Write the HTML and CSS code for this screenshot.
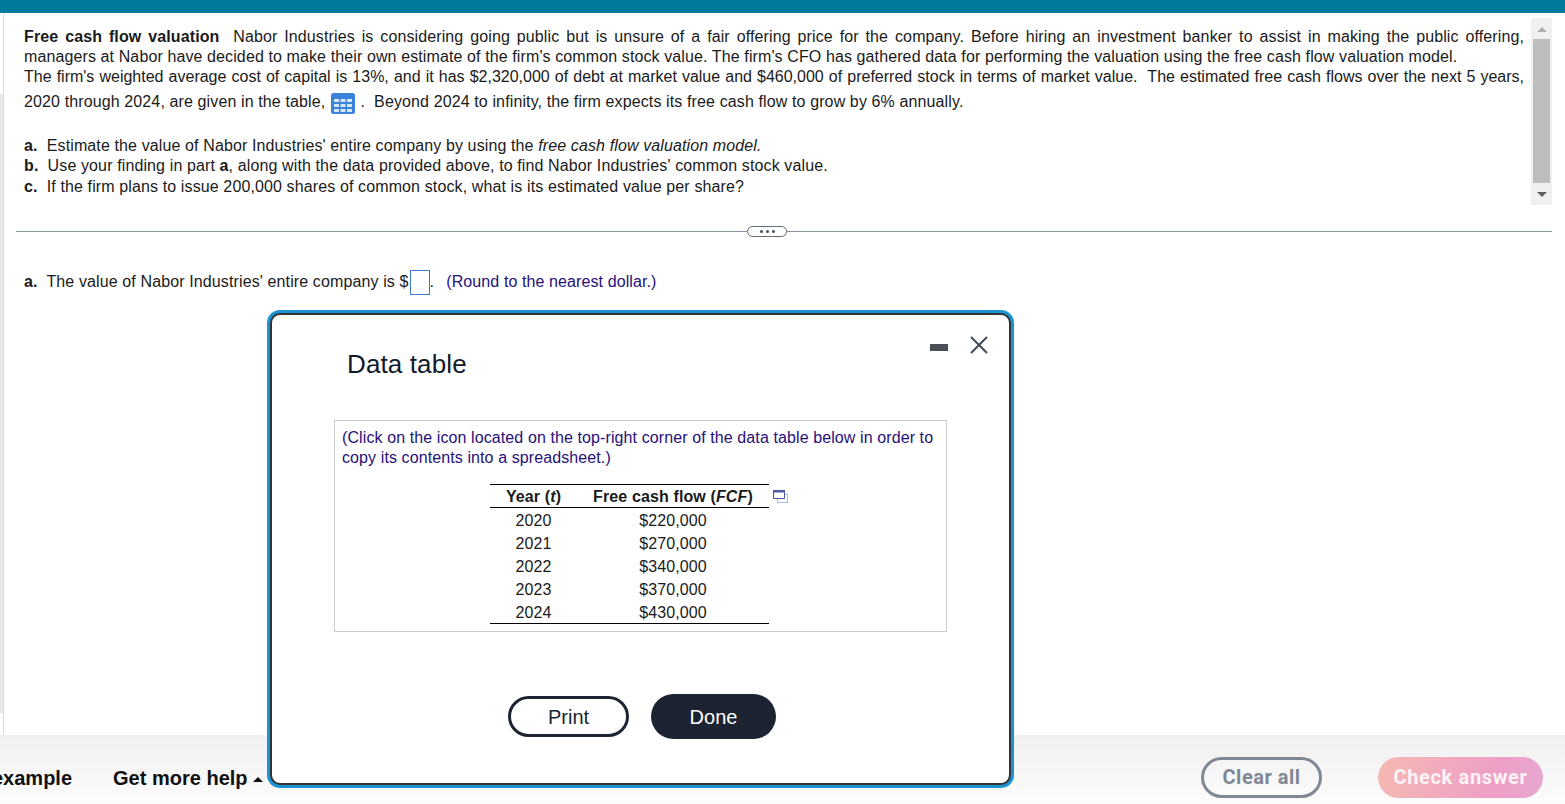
FILE: index.html
```html
<!DOCTYPE html>
<html lang="en">
<head>
    <meta charset="UTF-8">
    <title>Free cash flow valuation</title>
    <link rel="stylesheet" href="styles.css">
</head>
<body>
    <div class="topbar"></div>
    <div class="edge"></div>
    <div class="main">
        <div class="question-area">
            <div class="question">
                <p class="intro"><span class="first-line"><b>Free cash flow valuation</b>&nbsp;&nbsp;Nabor Industries is considering going public but is unsure of a fair offering price for the company. Before hiring an investment banker to assist in making the public offering,</span> managers at Nabor have decided to make their own estimate of the firm's common stock value. The firm's CFO has gathered data for performing the valuation using the free cash flow valuation model.</p>
                <p class="given">The firm's weighted average cost of capital is 13%, and it has $2,320,000 of debt at market value and $460,000 of preferred stock in terms of market value.&nbsp; The estimated free cash flows over the next 5 years, <span class="last-line">2020 through 2024, are given in the table,
                    <svg class="table-icon" width="24" height="21" viewBox="0 0 24 21">
                        <rect width="24" height="21" rx="2.500" fill="#3b83d8"/>
                        <g fill="#d6e6fa">
                            <rect x="3" y="6" width="5" height="3"/><rect x="9.500" y="6" width="5" height="3"/><rect x="16" y="6" width="5" height="3"/>
                            <rect x="3" y="11" width="5" height="3"/><rect x="9.500" y="11" width="5" height="3"/><rect x="16" y="11" width="5" height="3"/>
                            <rect x="3" y="16" width="5" height="3"/><rect x="9.500" y="16" width="5" height="3"/><rect x="16" y="16" width="5" height="3"/>
                        </g>
                    </svg>&nbsp;.&nbsp;&nbsp;Beyond 2024 to infinity, the firm expects its free cash flow to grow by 6% annually.</span></p>
                <ul class="parts">
                    <li><b>a.</b>&nbsp; Estimate the value of Nabor Industries' entire company by using the <i>free cash flow valuation model.</i></li>
                    <li><b>b.</b>&nbsp; Use your finding in part <b>a</b>, along with the data provided above, to find Nabor Industries' common stock value.</li>
                    <li><b>c.</b>&nbsp; If the firm plans to issue 200,000 shares of common stock, what is its estimated value per share?</li>
                </ul>
            </div>
            <div class="scrollbar">
                <span class="arrow-up"></span>
                <span class="thumb"></span>
                <span class="arrow-down"></span>
            </div>
        </div>
        <div class="divider"><span class="more"><i></i><i></i><i></i></span></div>
        <p class="answer"><b>a.</b>&nbsp; The value of Nabor Industries' entire company is $<span class="answer-box"></span>.&nbsp; <span class="note round">(Round to the nearest dollar.)</span></p>
    </div>
    <div class="footer">
        <span class="link example">example</span>
        <span class="link help">Get more help <span class="caret"></span></span>
        <span class="spacer"></span>
        <button class="clear">Clear all</button>
        <button class="check">Check answer</button>
    </div>

    <div class="modal">
        <div class="modal-head">
            <h1>Data table</h1>
            <div class="modal-tools">
                <span class="minimize"></span>
                <svg width="18" height="18" viewBox="0 0 18 18"><path d="M1 1l16 16M17 1L1 17" stroke="#3f4a57" stroke-width="2" fill="none"/></svg>
            </div>
        </div>
        <div class="data-box">
            <p class="note">(Click on the icon located on the top-right corner of the data table below in order to copy its contents into a spreadsheet.)</p>
            <div class="table-wrap">
                <table>
                    <thead>
                        <tr><th class="col-year">Year (<i>t</i>)</th><th>Free cash flow (<i>FCF</i>)</th></tr>
                    </thead>
                    <tbody>
                        <tr><td>2020</td><td>$220,000</td></tr>
                        <tr><td>2021</td><td>$270,000</td></tr>
                        <tr><td>2022</td><td>$340,000</td></tr>
                        <tr><td>2023</td><td>$370,000</td></tr>
                        <tr><td>2024</td><td>$430,000</td></tr>
                    </tbody>
                </table>
                <svg class="copy-icon" width="15" height="13" viewBox="0 0 15 13">
                    <rect x="4.500" y="4.500" width="10" height="8" fill="#fff" stroke="#b4b9dc"/>
                    <rect x="0.500" y="1" width="11" height="7.500" fill="#fff" stroke="#4d5aa8"/>
                    <rect x="0" y="0" width="12" height="2.500" fill="#4d5aa8"/>
                </svg>
            </div>
        </div>
        <div class="modal-buttons">
            <button class="print">Print</button>
            <button class="done">Done</button>
        </div>
    </div>
</body>
</html>
```

FILE: styles.css
```css
* {
    box-sizing: border-box;
}

html, body {
    height: 100%;
}

body {
    margin: 0;
    font-family: "Liberation Sans", Arial, sans-serif;
    font-size: 16px;
    line-height: 20px;
    letter-spacing: 0.12px;
    color: #1a1a1a;
    background-color: #fff;
    display: flex;
    flex-direction: column;
    overflow: hidden;
    position: relative;
}

p {
    margin: 0;
}

.topbar {
    height: 13px;
    background-color: #00799e;
}

.edge {
    position: absolute;
    left: 0;
    top: 94px;
    width: 3px;
    height: 619px;
    background-color: #e8e8e8;
}

.main {
    height: 722px;
    margin-left: 3px;
    padding-top: 5px;
    border-left: 1px solid #ddd;
}

.question-area {
    display: flex;
    height: 187px;
    padding-left: 20px;
}

.question {
    width: 1500px;
    padding-top: 9px;
}

.intro {
    letter-spacing: 0.11px;
}

.first-line {
    display: block;
    text-align: justify;
    text-align-last: justify;
}

.given {
    letter-spacing: 0;
    text-align: justify;
}

.last-line {
    letter-spacing: 0.12px;
}

.table-icon {
    vertical-align: -7px;
    margin: 6px 1px 0 1px;
}

.parts {
    list-style: none;
    margin: 22px 0 0;
    padding: 0;
}

.parts li:last-child {
    margin-top: 1px;
}

.scrollbar {
    width: 21px;
    height: 187px;
    margin-left: 7px;
    background-color: #f0f0f0;
    display: flex;
    flex-direction: column;
    align-items: center;
}

.thumb {
    width: 17px;
    height: 144px;
    background-color: #bdbdbd;
}

.arrow-up, .arrow-down {
    width: 0;
    height: 0;
    border-left: 5px solid transparent;
    border-right: 5px solid transparent;
}

.arrow-up {
    margin: 9px 0 7px;
    border-bottom: 5px solid #b0b0b0;
}

.arrow-down {
    margin-top: 9px;
    border-top: 5px solid #606060;
}

.divider {
    margin: 26px 13px 0 12px;
    height: 1px;
    background-color: #8b93a3;
    display: flex;
    align-items: center;
}

.more {
    width: 40px;
    height: 11px;
    margin-left: 731px;
    background-color: #fff;
    border: 1px solid #5f6b7a;
    border-radius: 6px;
    display: flex;
    justify-content: center;
    align-items: center;
    gap: 3px;
}

.more i {
    width: 3px;
    height: 3px;
    border-radius: 50%;
    background-color: #444f5c;
}

.answer {
    margin: 38px 0 0 20px;
}

.answer-box {
    display: inline-block;
    width: 20px;
    height: 25px;
    margin-left: 1px;
    vertical-align: middle;
    border: 1px solid #3f77d8;
}

.note {
    color: #26107a;
    letter-spacing: 0.1px;
}

.round {
    margin-left: 3px;
}

.footer {
    height: 69px;
    display: flex;
    align-items: center;
    padding: 16px 22px 0 0;
    background: linear-gradient(#f0f0f0, #fcfcfc);
    overflow: hidden;
}

.link {
    font-size: 20px;
    font-weight: bold;
    letter-spacing: 0;
    color: #111;
    white-space: nowrap;
}

.example {
    margin-left: -8px;
}

.help {
    margin-left: 41px;
}

.caret {
    display: inline-block;
    width: 0;
    height: 0;
    margin-bottom: 3px;
    border-left: 5px solid transparent;
    border-right: 5px solid transparent;
    border-bottom: 5px solid #111;
}

.spacer {
    flex: 1;
}

button {
    font-size: 20px;
    border-radius: 24px;
    cursor: pointer;
}

.clear, .check {
    font-family: Roboto, sans-serif;
    font-weight: bold;
    height: 41px;
    padding-bottom: 3px;
}

.clear {
    width: 121px;
    background-color: transparent;
    border: 3px solid #808795;
    color: #808795;
    letter-spacing: 0.5px;
}

.check {
    width: 165px;
    margin-left: 56px;
    border: none;
    color: #fbf3f6;
    letter-spacing: 0.65px;
    background: linear-gradient(100deg, #f4b9b2, #ee9fc6 70%, #e6a7cf);
}

/* floats over the page */
.modal {
    position: absolute;
    left: 270px;
    top: 313px;
    width: 741px;
    height: 472px;
    background-color: #fff;
    border: 2px solid #333;
    border-radius: 10px;
    box-shadow: 0 0 0 3px #1b93d2;
    padding: 0 62px;
    display: flex;
    flex-direction: column;
}

.modal-head {
    display: flex;
    justify-content: space-between;
    height: 105px;
    padding: 21px 0 0 13px;
}

.modal-head h1 {
    margin: 12px 0 0;
    font-size: 26px;
    line-height: 32px;
    font-weight: normal;
    color: #111a2c;
}

.modal-tools {
    display: flex;
    align-items: flex-start;
    gap: 22px;
    margin-right: -41px;
}

.minimize {
    width: 18px;
    height: 7px;
    margin-top: 8px;
    background-color: #4a4f58;
}

.data-box {
    width: 613px;
    height: 212px;
    border: 1px solid #ccc;
    padding: 7px;
}

.table-wrap {
    position: relative;
    width: 279px;
    margin: 16px 0 0 148px;
}

table {
    width: 279px;
    border-collapse: collapse;
    border-top: 1px solid #000;
    border-bottom: 1px solid #000;
    color: #1a1a1a;
}

th {
    height: 23px;
    padding: 2px 0 0;
    font-weight: bold;
    border-bottom: 1px solid #000;
}

td {
    height: 23px;
    padding: 3px 0 0;
    text-align: center;
}

.col-year {
    width: 87px;
}

.copy-icon {
    position: absolute;
    left: 283px;
    top: 6px;
}

.modal-buttons {
    display: flex;
    align-items: center;
    gap: 22px;
    margin: 62px 0 0 174px;
}

.print, .done {
    font-family: "Liberation Sans", Arial, sans-serif;
    padding-top: 3px;
}

.print {
    width: 121px;
    height: 41px;
    background-color: #fff;
    border: 3px solid #1d2433;
    color: #1d2433;
}

.done {
    width: 125px;
    height: 45px;
    background-color: #1c2331;
    border: none;
    color: #fff;
}
```
